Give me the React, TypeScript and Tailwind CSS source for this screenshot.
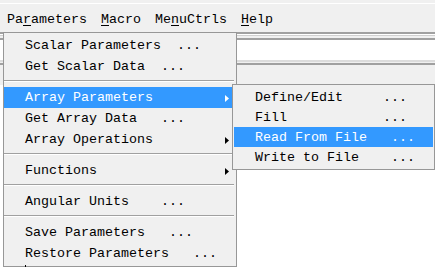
import React from "react";

const mono = { fontFamily: '"Liberation Mono", "DejaVu Sans Mono", monospace' };

type Entry =
  | { kind: "item"; label: string; arrow?: boolean; active?: boolean }
  | { kind: "sep" };

const mainItems: Entry[] = [
  { kind: "item", label: "Scalar Parameters  ..." },
  { kind: "item", label: "Get Scalar Data  ..." },
  { kind: "sep" },
  { kind: "item", label: "Array Parameters", arrow: true, active: true },
  { kind: "item", label: "Get Array Data   ..." },
  { kind: "item", label: "Array Operations", arrow: true },
  { kind: "sep" },
  { kind: "item", label: "Functions", arrow: true },
  { kind: "sep" },
  { kind: "item", label: "Angular Units    ..." },
  { kind: "sep" },
  { kind: "item", label: "Save Parameters   ..." },
  { kind: "item", label: "Restore Parameters   ..." },
];

const subItems = [
  { label: "Define/Edit     ..." },
  { label: "Fill            ..." },
  { label: "Read From File   ...", active: true },
  { label: "Write to File    ..." },
];

function Arrow({ white }: { white?: boolean }) {
  return (
    <svg width="4" height="7" viewBox="0 0 4 7" className="shrink-0">
      <polygon points="0,0 4,3.5 0,7" fill={white ? "#ffffff" : "#000000"} />
    </svg>
  );
}

function MenuBar() {
  return (
    <div className="flex h-[28px] items-center bg-[#f0f0f0] pt-[4px] text-[13.33px] leading-[14px] text-black" style={mono}>
      <span className="px-[7px]">
        Pa<span className="underline underline-offset-2">r</span>ameters
      </span>
      <span className="px-[7px]">
        <span className="underline underline-offset-2">M</span>acro
      </span>
      <span className="px-[7px]">
        Me<span className="underline underline-offset-2">n</span>uCtrls
      </span>
      <span className="px-[7px]">
        <span className="underline underline-offset-2">H</span>elp
      </span>
    </div>
  );
}

function MainMenu() {
  return (
    <div
      className="absolute left-[3px] top-[32px] w-[234px] border border-[#979797] bg-[#f0f0f0] py-[2px] text-[13.33px] leading-[14px]"
      style={mono}
    >
      {mainItems.map((e, i) =>
        e.kind === "sep" ? (
          <div key={i} className="mr-[2px] flex h-[10px] flex-col pt-[3px]">
            <div className="h-[1px] bg-[#a0a0a0]" />
            <div className="h-[1px] bg-white" />
          </div>
        ) : (
          <div
            key={i}
            className={`mr-[4px] flex h-[21px] items-center justify-between pl-[21px] pr-[3px] pt-[1px] ${
              e.active ? "bg-[#3399ff] text-white" : "text-black"
            }`}
          >
            <span className="whitespace-pre">{e.label}</span>
            {e.arrow && <Arrow white={e.active} />}
          </div>
        )
      )}
    </div>
  );
}

function SubMenu() {
  return (
    <div
      className="absolute left-[232px] top-[84px] w-[203px] border border-[#979797] bg-[#f0f0f0] py-[2px] text-[13.33px] leading-[14px]"
      style={mono}
    >
      {subItems.map((s) => (
        <div
          key={s.label}
          className={`mx-[1px] flex h-[20px] items-center pl-[21px] pt-[1px] ${
            s.active ? "bg-[#3399ff] text-white" : "text-black"
          }`}
        >
          <span className="whitespace-pre">{s.label}</span>
        </div>
      ))}
    </div>
  );
}

export default function App() {
  return (
    <div className="relative flex h-[267px] w-[435px] flex-col overflow-hidden bg-white">
      <div className="h-[3px] bg-[#f0f0f0]" />
      <div className="h-[1px] bg-white" />
      <MenuBar />
      <div className="h-[2px] bg-[#a0a0a0]" />
      <div className="h-[1px] bg-white" />
      <div className="h-[1px] bg-[#d0d0d0]" />
      <div className="h-[2px] bg-[#f0f0f0]" />
      <div className="h-[2px] bg-[#a0a0a0]" />
      <div className="h-[20px] bg-white" />
      <div className="h-[2px] bg-[#dcdcdc]" />
      <div className="h-[1px] bg-[#f0f0f0]" />
      <div className="h-[2px] bg-[#a0a0a0]" />
      <div className="h-[20px] bg-[#f0f0f0]" />
      <div className="flex-1 bg-white" />
      <MainMenu />
      <SubMenu />
      <div className="absolute left-[25px] top-[265px] h-[2px] w-[1px] bg-black" />
    </div>
  );
}
